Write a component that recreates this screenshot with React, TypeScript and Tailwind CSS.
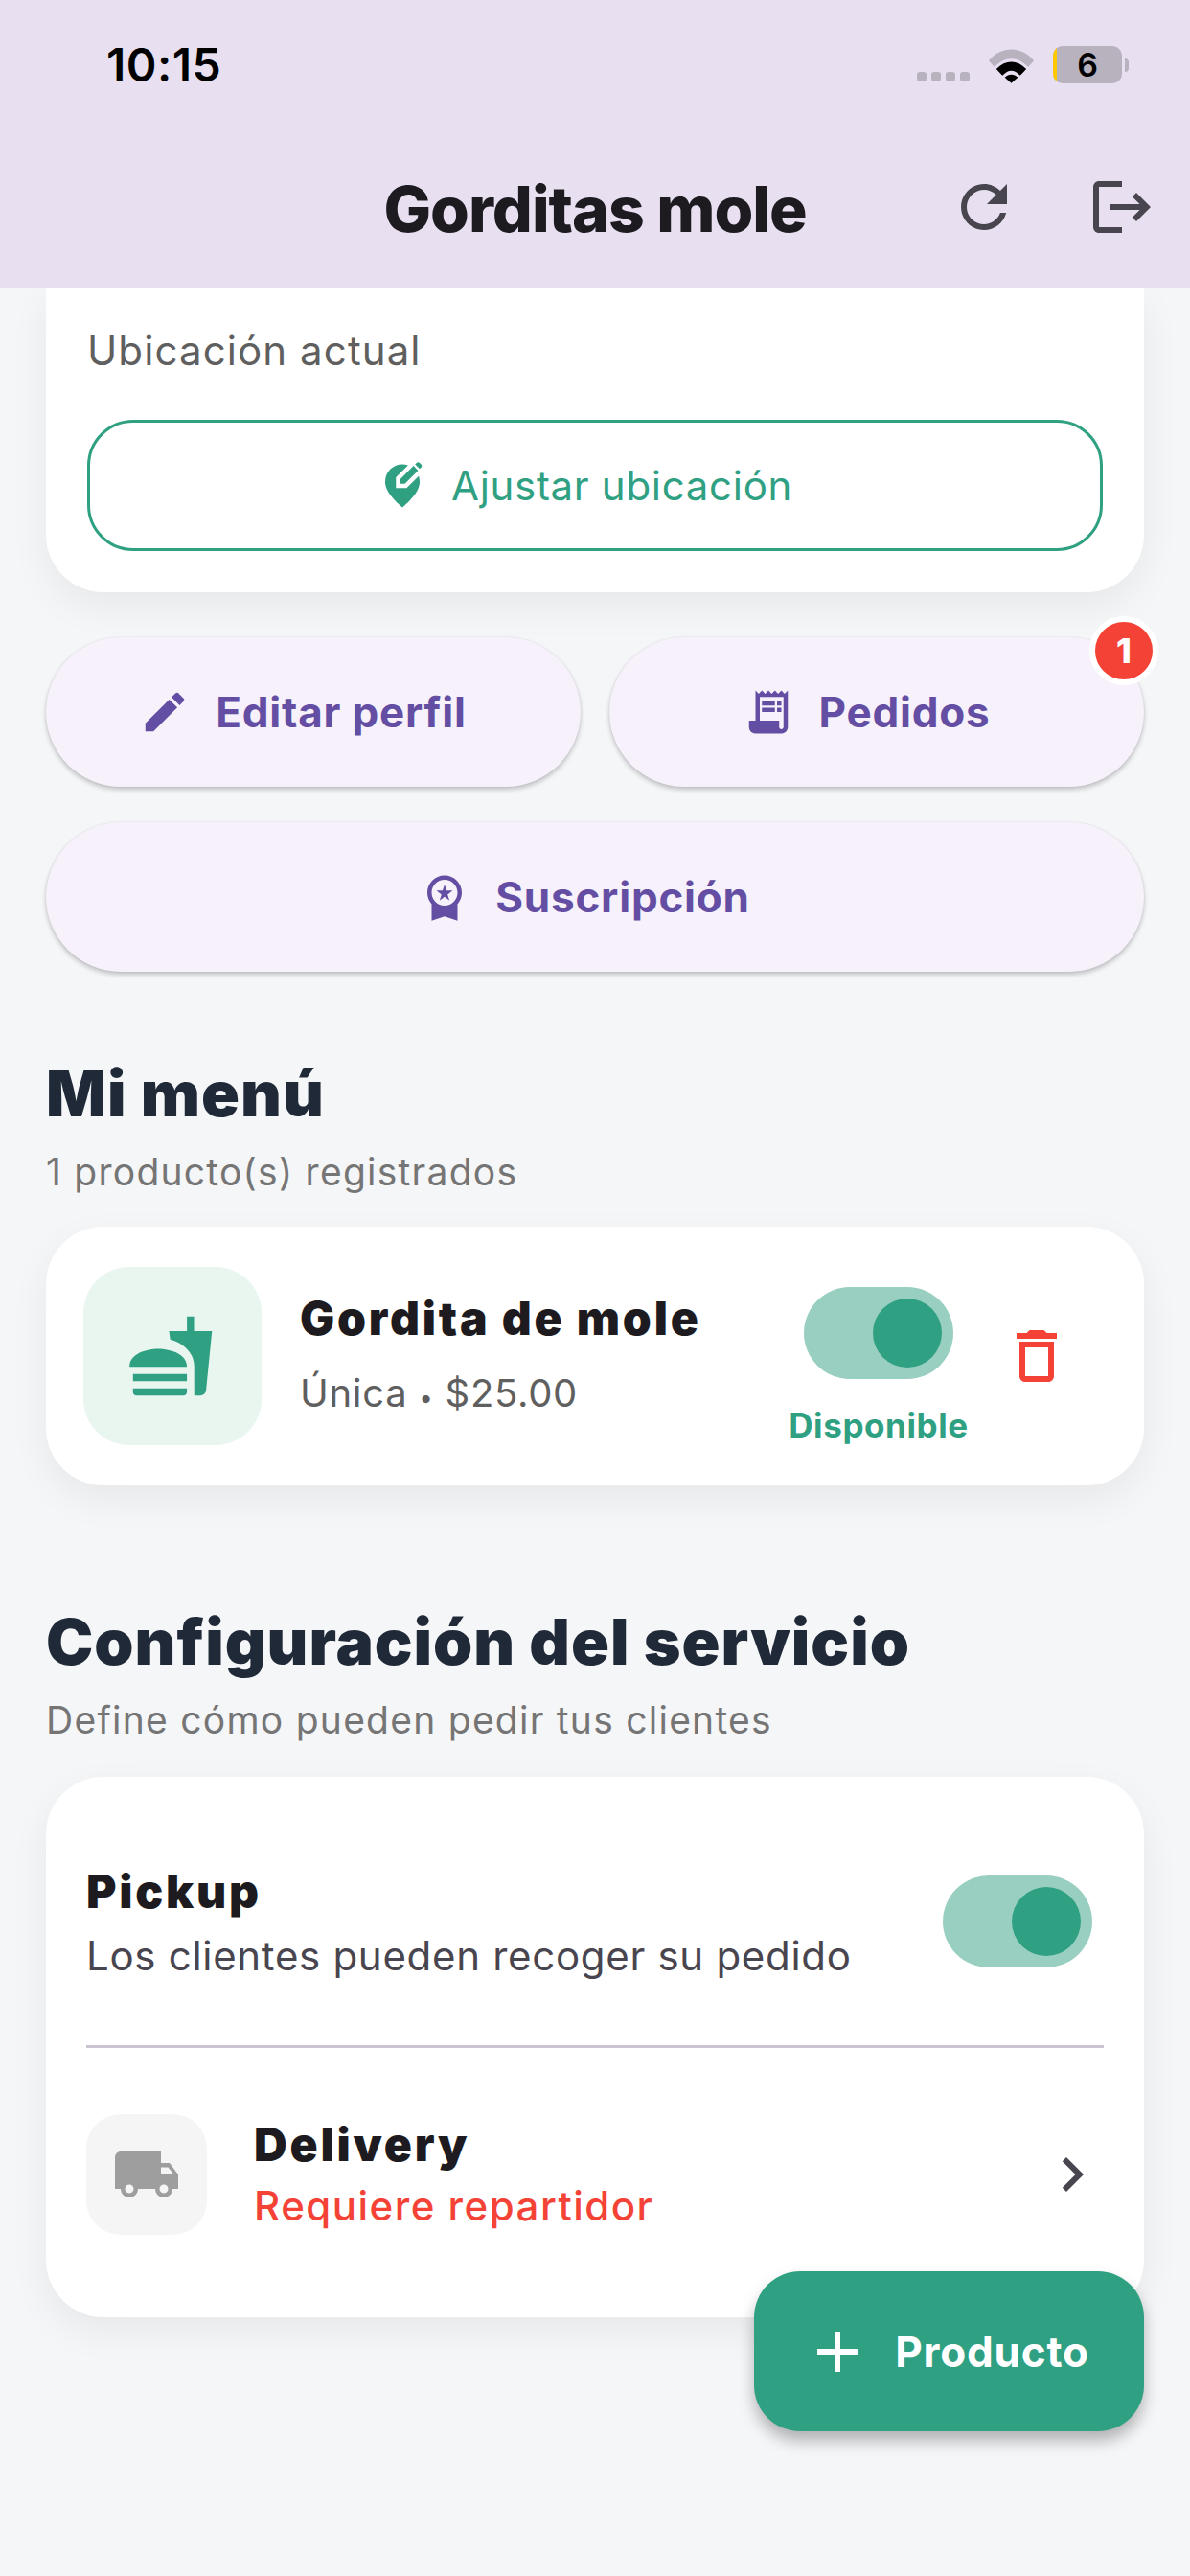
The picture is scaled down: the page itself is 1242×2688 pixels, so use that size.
const font = "font-['Inter',sans-serif]";

function Icon({ d, className }: { d: string; className: string }) {
	return (
		<svg viewBox="0 0 24 24" fill="currentColor" className={className}>
			<path d={d} />
		</svg>
	);
}

const icons = {
	refresh:
		'M17.65 6.35C16.2 4.9 14.21 4 12 4c-4.42 0-7.99 3.58-7.99 8s3.57 8 7.99 8c3.73 0 6.84-2.55 7.73-6h-2.08c-.82 2.33-3.04 4-5.65 4-3.31 0-6-2.69-6-6s2.69-6 6-6c1.66 0 3.14.69 4.22 1.78L13 11h7V4l-2.35 2.35z',
	logout:
		'M17 7l-1.41 1.41L18.17 11H8v2h10.17l-2.58 2.58L17 17l5-5zM4 5h8V3H4c-1.1 0-2 .9-2 2v14c0 1.1.9 2 2 2h8v-2H4V5z',
	editLocation:
		'M13.95 13H9V8.05l5.61-5.61C13.78 2.16 12.9 2 12 2 7.8 2 4 5.22 4 10.2c0 3.32 2.67 7.25 8 11.8 5.33-4.55 8-8.48 8-11.8 0-1.01-.16-1.94-.45-2.8L13.95 13zM11 11h2.12l6.16-6.16-2.12-2.12L11 8.88V11zM20.71 2 20 1.29c-.39-.39-1.02-.39-1.41 0l-.72.72 2.12 2.12.72-.72c.39-.39.39-1.02 0-1.41z',
	edit: 'M3 17.25V21h3.75L17.81 9.94l-3.75-3.75L3 17.25zM20.71 7.04c.39-.39.39-1.02 0-1.41l-2.34-2.34c-.39-.39-1.02-.39-1.41 0l-1.83 1.83 3.75 3.75 1.83-1.83z',
	receipt:
		'M19.5 3.5 18 2l-1.5 1.5L15 2l-1.5 1.5L12 2l-1.5 1.5L9 2 7.5 3.5 6 2v14H3v3c0 1.66 1.34 3 3 3h12c1.66 0 3-1.34 3-3V2l-1.5 1.5zM19 19c0 .55-.45 1-1 1s-1-.45-1-1v-3H8V5h11v14zM9 7h6v2H9zm7 0h2v2h-2zm-7 3h6v2H9zm7 0h2v2h-2z',
	premium:
		'M9.68 13.69 12 11.93l2.31 1.76-.88-2.85L15.75 9h-2.84L12 6.19 11.09 9H8.25l2.31 1.84-.88 2.85zM20 10c0-4.42-3.58-8-8-8s-8 3.58-8 8c0 2.03.76 3.87 2 5.28V23l6-2 6 2v-7.72c1.24-1.41 2-3.25 2-5.28zm-8-6c3.31 0 6 2.69 6 6s-2.69 6-6 6-6-2.69-6-6 2.69-6 6-6z',
	fastfood:
		'M18.06 22.99h1.66c.84 0 1.53-.64 1.63-1.46L23 5.05h-5V1h-1.97v4.05h-4.97l.3 2.34c1.71.47 3.31 1.32 4.27 2.26 1.44 1.42 2.43 2.89 2.43 5.29v8.05zM1 21.99V21h15.03v.99c0 .55-.45 1-1.01 1H2.01c-.56 0-1.01-.45-1.01-1zm15.03-7c0-4.5-6.72-5-8.02-5-1.3 0-7.96.5-7.96 5h15.98zM1.02 17h15v2h-15z',
	trash: 'M6 19c0 1.1.9 2 2 2h8c1.1 0 2-.9 2-2V7H6v12zM8 9h8v10H8V9zm7.5-5l-1-1h-5l-1 1H5v2h14V4z',
	truck:
		'M20 8h-3V4H3c-1.1 0-2 .9-2 2v11h2c0 1.66 1.34 3 3 3s3-1.34 3-3h6c0 1.66 1.34 3 3 3s3-1.34 3-3h2v-5l-3-4zM6 18.5c-.83 0-1.5-.67-1.5-1.5s.67-1.5 1.5-1.5 1.5.67 1.5 1.5-.67 1.5-1.5 1.5zm13.5-9l1.96 2.5H17V9.5h2.5zm-1.5 9c-.83 0-1.5-.67-1.5-1.5s.67-1.5 1.5-1.5 1.5.67 1.5 1.5-.67 1.5-1.5 1.5z',
	chevron: 'M10 6L8.59 7.41 13.17 12l-4.58 4.59L10 18l6-6z',
	add: 'M19 13h-6v6h-2v-6H5v-2h6V5h2v6h6v2z',
};

function StatusBar() {
	return (
		<div className="flex h-[130px] items-start justify-between pl-[111px] pr-[64px] pt-[46px]">
			<span className="text-[48px] leading-[44px] font-semibold tracking-[0.5px] text-black">10:15</span>
			<div className="mt-[2px] flex items-end">
				<div className="mb-[2px] flex gap-[5px]">
					<span className="h-[10px] w-[10px] rounded-[3px] bg-[#b8b2bf]" />
					<span className="h-[10px] w-[10px] rounded-[3px] bg-[#b8b2bf]" />
					<span className="h-[10px] w-[10px] rounded-[3px] bg-[#b8b2bf]" />
					<span className="h-[10px] w-[10px] rounded-[3px] bg-[#b8b2bf]" />
				</div>
				<svg viewBox="0 0 48 36" className="ml-[20px] h-[36px] w-[47px]">
					<path d="M0 12 C13 -4 35 -4 48 12 L42 19 C31 7 17 7 6 19 Z" fill="#b8b2bf" />
					<path d="M8 21 C18 11 30 11 40 21 L33.500 28 C27 21 21 21 14.500 28 Z" fill="#000" />
					<path d="M17 30 C21 26 27 26 31 30 L24 36 Z" fill="#000" />
				</svg>
				<div className="relative ml-[20px] flex h-[39px] w-[72px] items-center justify-center overflow-hidden rounded-[10px] bg-[#b8b2bf]">
					<span className="absolute inset-y-0 left-0 w-[4px] bg-[#ffc800]" />
					<span className="text-[34px] leading-none font-semibold text-black">6</span>
				</div>
				<span className="mb-[12px] ml-[3px] h-[14px] w-[4px] rounded-r-full bg-[#b8b2bf]" />
			</div>
		</div>
	);
}

function Toggle() {
	return (
		<div className="flex h-[96px] w-[156px] items-center justify-end rounded-full bg-[#99cfc0] pr-[12px]">
			<span className="h-[72px] w-[72px] rounded-full bg-[#2fa082]" />
		</div>
	);
}

function ActionButton({ icon, label }: { icon: string; label: string }) {
	return (
		<button className="flex h-[156px] w-full items-center justify-center gap-[26px] rounded-[78px] bg-[#f6f1fa] pr-[22px] text-[#644ea3] shadow-[0_3px_5px_rgba(0,0,0,0.22),0_0_2px_rgba(0,0,0,0.08)]">
			<Icon d={icon} className="h-[54px] w-[54px]" />
			<span className="text-[44px] leading-none font-bold tracking-[0.8px]">{label}</span>
		</button>
	);
}

export default function App() {
	return (
		<div className={`relative h-[2688px] w-[1242px] overflow-hidden bg-[#f5f6f8] ${font}`}>
			<header className="relative z-10 h-[300px] bg-[#e8dff0]">
				<StatusBar />
				<div className="relative mt-[43px] flex h-[90px] items-center justify-center">
					<h1 className="text-[66px] leading-none font-extrabold tracking-[-1px] text-[#1d1b20]">Gorditas mole</h1>
					<Icon d={icons.refresh} className="absolute left-[991px] top-[7px] h-[72px] w-[72px] text-[#49454f]" />
					<Icon d={icons.logout} className="absolute left-[1135px] top-[7px] h-[72px] w-[72px] text-[#49454f]" />
				</div>
			</header>

			<main className="px-[48px]">
				<section className="rounded-b-[60px] bg-white px-[43px] pb-[43px] pt-[39px] shadow-[0_15px_40px_rgba(0,0,0,0.06)]">
					<p className="text-[42px] leading-[54px] tracking-[1.1px] text-[#5f5f5f]">Ubicación actual</p>
					<button className="mt-[45px] flex h-[137px] w-full items-center justify-center gap-[24px] rounded-[48px] border-[3px] border-[#2fa082] pr-[22px] text-[#2fa082]">
						<Icon d={icons.editLocation} className="h-[54px] w-[54px]" />
						<span className="text-[42px] leading-none tracking-[0.7px]">Ajustar ubicación</span>
					</button>
				</section>

				<div className="mt-[47px] grid grid-cols-2 gap-x-[30px] gap-y-[37px]">
					<ActionButton icon={icons.edit} label="Editar perfil" />
					<div className="relative">
						<ActionButton icon={icons.receipt} label="Pedidos" />
						<span className="absolute right-[-15px] top-[-22px] flex h-[72px] w-[72px] items-center justify-center rounded-full border-[6px] border-white bg-[#f44336] text-[36px] font-extrabold text-white">
							1
						</span>
					</div>
					<div className="col-span-2">
						<ActionButton icon={icons.premium} label="Suscripción" />
					</div>
				</div>

				<h2 className="mt-[87px] text-[66px] leading-[80px] font-black tracking-[1px] text-[#1f2937]">Mi menú</h2>
				<p className="mt-[18px] text-[39px] leading-[48px] tracking-[1.25px] text-[#757575]">1 producto(s) registrados</p>

				<section className="mt-[33px] flex h-[270px] items-center rounded-[60px] bg-white pl-[39px] shadow-[0_15px_40px_rgba(0,0,0,0.06)]">
					<div className="flex h-[186px] w-[186px] shrink-0 items-center justify-center rounded-[48px] bg-[#e9f6ef]">
						<Icon d={icons.fastfood} className="h-[90px] w-[90px] text-[#2fa082]" />
					</div>
					<div className="ml-[40px] w-[488px]">
						<p className="text-[48px] leading-[60px] font-black tracking-[2.8px] text-[#1d1b20]">Gordita de mole</p>
						<p className="mt-[22px] text-[40px] leading-[52px] tracking-[0.7px] text-[#5f5f5f]">
							Única <span className="text-[26px]">•</span> $25.00
						</p>
					</div>
					<div className="flex w-[232px] flex-col items-center pt-[20px]">
						<Toggle />
						<p className="mt-[28px] text-[35px] leading-[40px] font-bold tracking-[0.6px] text-[#2fa082]">Disponible</p>
					</div>
					<Icon d={icons.trash} className="ml-[13px] h-[72px] w-[72px] text-[#f44336]" />
				</section>

				<h2 className="mt-[123px] text-[66px] leading-[80px] font-black tracking-[1px] text-[#1f2937]">Configuración del servicio</h2>
				<p className="mt-[18px] text-[39px] leading-[48px] tracking-[1.25px] text-[#757575]">Define cómo pueden pedir tus clientes</p>

				<section className="mt-[35px] h-[564px] rounded-[60px] bg-white px-[42px] shadow-[0_15px_40px_rgba(0,0,0,0.06)]">
					<div className="flex h-[283px] items-center justify-between border-b-[3px] border-[#cac4d0] pr-[12px] pt-[22px]">
						<div>
							<p className="text-[48px] leading-[60px] font-black tracking-[2.8px] text-[#1d1b20]">Pickup</p>
							<p className="mt-[11px] text-[42px] leading-[52px] tracking-[0.7px] text-[#49454f]">Los clientes pueden recoger su pedido</p>
						</div>
						<Toggle />
					</div>
					<div className="flex h-[264px] items-center">
						<div className="flex h-[126px] w-[126px] shrink-0 items-center justify-center rounded-[36px] bg-[#f5f5f5]">
							<Icon d={icons.truck} className="h-[72px] w-[72px] text-[#9e9e9e]" />
						</div>
						<div className="ml-[49px] flex-1 pb-[3px]">
							<p className="text-[48px] leading-[60px] font-black tracking-[2.8px] text-[#1d1b20]">Delivery</p>
							<p className="mt-[8px] text-[42px] leading-[52px] font-medium tracking-[1.5px] text-[#f44336]">Requiere repartidor</p>
						</div>
						<Icon d={icons.chevron} className="mr-[-3px] h-[72px] w-[72px] text-[#49454f]" />
					</div>
				</section>
			</main>

			<button className="absolute left-[787px] top-[2370px] flex h-[167px] w-[407px] items-center justify-center gap-[24px] rounded-[48px] bg-[#2fa082] pr-[6px] text-white shadow-[0_10px_16px_rgba(0,0,0,0.28)]">
				<Icon d={icons.add} className="h-[72px] w-[72px]" />
				<span className="text-[44px] leading-none font-bold tracking-[0.8px]">Producto</span>
			</button>
		</div>
	);
}
